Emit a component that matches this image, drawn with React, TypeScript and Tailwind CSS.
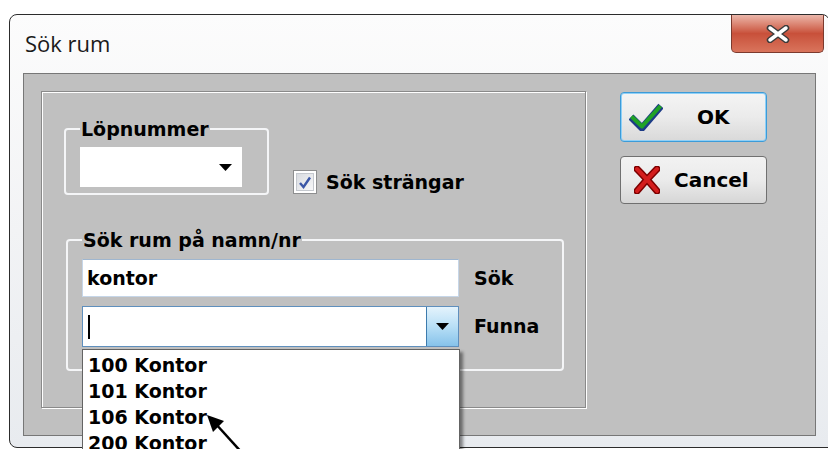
const ui = "font-['DejaVu_Sans',sans-serif] font-bold text-black";

function DownTriangle() {
  return (
    <svg width="13" height="7" viewBox="0 0 13 7">
      <path d="M0 0h13L6.5 7z" fill="#000" />
    </svg>
  );
}

function CheckIcon() {
  return (
    <svg width="34" height="28" viewBox="0 0 34 28">
      <path d="M2 14 L13 25 L32 3" fill="none" stroke="#1c3b86" strokeWidth="7" strokeLinejoin="round" />
      <path d="M2.5 13.5 L13 23.5 L31.5 3" fill="none" stroke="#20a226" strokeWidth="4" strokeLinejoin="round" />
    </svg>
  );
}

function CrossIcon() {
  return (
    <svg width="26" height="28" viewBox="0 0 26 28">
      <path d="M3 3 Q12 12 23 25 M23 3 Q13 13 3 25" fill="none" stroke="#7d0000" strokeWidth="7" strokeLinecap="round" />
      <path d="M3 3 Q12 12 23 25 M23 3 Q13 13 3 25" fill="none" stroke="#d41d1d" strokeWidth="4" strokeLinecap="round" />
    </svg>
  );
}

function CloseGlyph() {
  return (
    <svg width="24" height="18" viewBox="0 0 24 18">
      <path d="M4 3 L20 15 M20 3 L4 15" stroke="#3b3b3b" strokeWidth="6.5" strokeLinecap="round" />
      <path d="M4 3 L20 15 M20 3 L4 15" stroke="#fff" strokeWidth="3.5" strokeLinecap="round" />
    </svg>
  );
}

const hits = ["100 Kontor", "101 Kontor", "106 Kontor", "200 Kontor"];

export default function App() {
  return (
    <div className="relative w-[828px] h-[449px] overflow-hidden bg-white pt-[14px] pl-[9px]">
      {/* dialog window */}
      <div className="w-[821px] h-[434px] flex flex-col border border-[#2c2c2c] rounded-t-[8px] rounded-bl-[8px] bg-gradient-to-b from-[#fcfcfc] via-[#f2f3f5] to-[#e8ebef]">
        <div className="h-[58px] flex justify-between">
          <div className="pl-[15px] pt-[14px] font-['Open_Sans',sans-serif] text-[22px] text-[#1a1a1a] leading-[28px]">
            Sök rum
          </div>
          <div className="mr-[5px] w-[93px] h-[38px] flex items-center justify-center rounded-b-[5px] border border-t-0 border-[#7c3a2e] bg-gradient-to-b from-[#eab6aa] via-[#c8503a] to-[#d9745c]">
            <CloseGlyph />
          </div>
        </div>

        <div className="ml-[13px] w-[793px] h-[363px] border border-[#777] bg-[#c0c0c0] flex items-start pl-[17px] pt-[17px]">
          {/* etched panel */}
          <div className="w-[545px] h-[317px] border border-[#8a8a8a] shadow-[1px_1px_0_#fff,inset_1px_1px_0_#fff] pl-[22px] pt-[26px] flex flex-col">
            <div className="flex items-start">
              <fieldset className="w-[205px] h-[77px] border-2 border-[#f4f5f7] rounded-[4px] px-[14px] pt-[7px]">
                <legend className={`${ui} text-[19px] leading-[22px] px-[1px]`}>Löpnummer</legend>
                <div className="w-[162px] h-[40px] bg-white flex items-center justify-end pr-[10px]">
                  <DownTriangle />
                </div>
              </fieldset>
              <label className="ml-[24px] mt-[52px] flex items-center gap-[9px]">
                <span className="w-[24px] h-[24px] border border-[#8d8e8f] bg-white p-[2px]">
                  <span className="w-full h-full flex items-center justify-center border border-[#c4c8ce] bg-gradient-to-br from-[#d9dce1] to-[#f7f7f8]">
                    <svg width="14" height="13" viewBox="0 0 14 13">
                      <path d="M2 7 L5.5 11 L12 1.5" fill="none" stroke="#3b57a7" strokeWidth="2.4" />
                    </svg>
                  </span>
                </span>
                <span className={`${ui} text-[19px] leading-[22px]`}>Sök strängar</span>
              </label>
            </div>

            <fieldset className="mt-[34px] ml-[2px] w-[498px] h-[142px] border-2 border-[#f4f5f7] rounded-[4px] px-[14px] pt-[8px]">
              <legend className={`${ui} text-[19px] leading-[22px] px-[1px]`}>Sök rum på namn/nr</legend>
              <div className="flex items-center">
                <div className="w-[377px] h-[38px] bg-white border border-[#c6d6e8] border-t-[#9fb6cf] flex items-center pl-[4px]">
                  <span className={`${ui} text-[19px]`}>kontor</span>
                </div>
                <span className={`${ui} ml-[15px] text-[19px]`}>Sök</span>
              </div>
              <div className="mt-[9px] flex items-center">
                <div className="w-[377px] h-[41px] bg-white border border-[#5f8fbd] flex">
                  <div className="flex-1 flex items-center pl-[5px]">
                    <span className="w-[2px] h-[24px] bg-black" />
                  </div>
                  <div className="w-[32px] border-l border-[#3d7bad] bg-gradient-to-b from-[#e4f3fc] via-[#b8dff6] to-[#86c2ea] flex items-center justify-center">
                    <DownTriangle />
                  </div>
                </div>
                <span className={`${ui} ml-[15px] text-[19px]`}>Funna</span>
              </div>
            </fieldset>
          </div>

          <div className="ml-[34px] mt-[1px] flex flex-col gap-[14px]">
            <button className="w-[147px] h-[50px] rounded-[4px] border border-[#3c9bd8] shadow-[inset_0_0_0_1px_#8fd0f7] bg-gradient-to-b from-[#f4f4f4] via-[#ebebeb] to-[#d9d9d9] flex items-center pl-[8px]">
              <CheckIcon />
              <span className={`${ui} text-[20px] ml-[34px]`}>OK</span>
            </button>
            <button className="w-[147px] h-[48px] rounded-[4px] border border-[#707070] bg-gradient-to-b from-[#f2f2f2] via-[#ebebeb] to-[#d6d6d6] flex items-center pl-[13px]">
              <CrossIcon />
              <span className={`${ui} text-[20px] ml-[14px]`}>Cancel</span>
            </button>
          </div>
        </div>
      </div>

      {/* open list of the Funna combo */}
      <div className="absolute left-[82px] top-[349px] w-[378px] h-[110px] bg-white border border-[#646464] shadow-[3px_3px_3px_rgba(0,0,0,0.45)] pt-[2px] pl-[5px]">
        {hits.map((h) => (
          <div key={h} className={`${ui} text-[19px] leading-[26px]`}>
            {h}
          </div>
        ))}
      </div>

      {/* mouse pointer */}
      <svg className="absolute left-[200px] top-[408px]" width="50" height="45" viewBox="0 0 50 45">
        <path d="M15 15 L44 47" stroke="#000" strokeWidth="2.5" />
        <path d="M7 7 L24 13 L13 24 Z" fill="#000" />
      </svg>
    </div>
  );
}
